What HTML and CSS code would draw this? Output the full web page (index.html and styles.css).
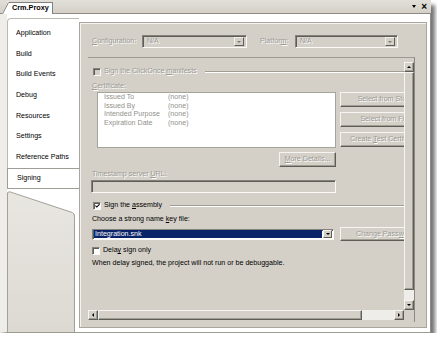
FILE: index.html
```html
<!DOCTYPE html>
<html>
<head>
<meta charset="utf-8">
<link rel="stylesheet" href="styles.css">
</head>
<body>
<div class="window">
  <div class="strip">
    <div class="doctab">
      <svg class="tabslant" width="7" height="12" viewBox="0 0 7 12"><polygon points="0,12 6,0 7,0 7,12" fill="#fff"/><line x1="0.5" y1="12" x2="6.5" y2="0.5" stroke="#808080" stroke-width="1"/></svg>
      <div class="tabbody">Crm.Proxy</div>
    </div>
    <div class="stripctl"><span class="dd"></span><span class="x">×</span></div>
  </div>
  <div class="frame">
    <div class="nav">
      <ul class="navlist">
        <li>Application</li>
        <li>Build</li>
        <li>Build Events</li>
        <li>Debug</li>
        <li>Resources</li>
        <li>Settings</li>
        <li>Reference Paths</li>
        <li class="sel">Signing</li>
      </ul>
      <div class="navfill">
        <svg class="slant" width="68" height="28" viewBox="0 0 68 28">
          <path d="M0,0 H68 V28 H67.5 V26 Q67.5,24.2 65.5,23.6 L3,2.9 Q1,2.3 0,4 Z" fill="#fff"/>
          <path d="M0.5,6 Q0.5,2.2 3,2.9 L65.5,23.6 Q67.5,24.2 67.5,28" fill="none" stroke="#a3a098" stroke-width="1"/>
        </svg>
      </div>
    </div>
    <div class="panel">
      <div class="cfgrow">
        <span class="lbl dis cfglbl"><u>C</u>onfiguration:</span>
        <div class="combo dis cfgcombo"><span class="ctext">N/A</span><span class="ddbtn"><i class="tri dim"></i></span></div>
        <span class="lbl dis platlbl">Platfor<u>m</u>:</span>
        <div class="combo dis platcombo"><span class="ctext">N/A</span><span class="ddbtn"><i class="tri dim"></i></span></div>
      </div>
      <div class="scrollframe">
        <div class="scrollgrid">
          <div class="viewport">
            <div class="row r1"><span class="chk chkdis"></span><span class="dis">Sign the ClickOnce <u>m</u>anifests</span><span class="etch e1"></span></div>
            <div class="lbl2 dis r2"><u>C</u>ertificate:</div>
            <div class="certblock">
              <div class="certlist">
                <div class="crow"><span class="ck">Issued To</span><span>(none)</span></div>
                <div class="crow"><span class="ck">Issued By</span><span>(none)</span></div>
                <div class="crow"><span class="ck">Intended Purpose</span><span>(none)</span></div>
                <div class="crow"><span class="ck">Expiration Date</span><span>(none)</span></div>
              </div>
              <div class="certbtns">
                <div class="btn dis wide">Select from Sto<u>r</u>e...</div>
                <div class="btn dis wide">Select from Fi<u>l</u>e...</div>
                <div class="btn dis wide">Create <u>T</u>est Certificate...</div>
              </div>
            </div>
            <div class="moredet"><div class="btn dis small"><u>M</u>ore Details...</div></div>
            <div class="lbl2 dis r5">Timestamp server <u>U</u>RL:</div>
            <div class="textbox"></div>
            <div class="row r7"><span class="chk"><svg width="6" height="6" viewBox="0 0 6 6"><path d="M0.5,2.5 L2.2,4.3 L5.5,0.8" fill="none" stroke="#000" stroke-width="1.3"/></svg></span><span>Sign the <u>a</u>ssembly</span><span class="etch e2"></span></div>
            <div class="lbl2 r8">Choose a strong name <u>k</u>ey file:</div>
            <div class="keyrow">
              <div class="combo keycombo"><span class="hl">Integration.snk</span><span class="ddbtn"><i class="tri"></i></span></div>
              <div class="btn dis wide chg">Change Pass<u>w</u>ord...</div>
            </div>
            <div class="row r10"><span class="chk"></span><span>Dela<u>y</u> sign only</span></div>
            <div class="lbl2 r11">When delay signed, the project will not run or be debuggable.</div>
          </div>
          <div class="vbar">
            <span class="sbtn"><i class="tri up"></i></span>
            <span class="thumb vthumb"></span>
            <span class="track"></span>
            <span class="sbtn"><i class="tri"></i></span>
          </div>
          <div class="hbar">
            <span class="sbtn"><i class="tri left"></i></span>
            <span class="thumb hthumb"></span>
            <span class="track"></span>
            <span class="sbtn"><i class="tri right"></i></span>
          </div>
          <div class="corner"></div>
        </div>
      </div>
    </div>
  </div>
</div>
</body>
</html>
```

FILE: styles.css
```css
* { box-sizing: border-box; margin: 0; padding: 0; }
html, body { background: #ffffff; }
body {
  font-family: "Liberation Sans", Arial, sans-serif;
  font-size: 7.1px;
  line-height: 9px;
  color: #000;
}
u { text-decoration: underline; text-underline-offset: 1px; text-decoration-thickness: 1px; }
ul { list-style: none; }

.window {
  width: 431px;
  height: 333px;
  background: #d4d0c8;
  box-shadow: 4px 5px 4px rgba(0, 0, 0, 0.55);
  display: flex;
  flex-direction: column;
}

/* document tab strip */
.strip {
  height: 14px;
  flex: none;
  display: flex;
  align-items: flex-end;
  border-bottom: 1px solid #8d8a82;
  padding-left: 2px;
  background: linear-gradient(#e2dfd9, #d4d0c8);
}
.doctab { display: flex; height: 12px; margin-bottom: -1px; }
.tabslant { display: block; }
.tabbody {
  width: 44px;
  background: #fff;
  border-top: 1px solid #808080;
  border-right: 1px solid #808080;
  font-weight: bold;
  font-size: 7.3px;
  line-height: 10px;
  padding-left: 3px;
}
.stripctl {
  margin-left: auto;
  align-self: center;
  display: flex;
  align-items: center;
  gap: 5px;
  padding-right: 4px;
}
.dd {
  width: 0; height: 0;
  border-left: 2.5px solid transparent;
  border-right: 2.5px solid transparent;
  border-top: 3px solid #000;
}
.x { font-weight: bold; font-size: 10px; line-height: 10px; }

/* main frame */
.frame {
  flex: 1;
  display: flex;
  background: #fff;
  padding: 4px 3px 4px 0;
  border-left: 7px solid #eeede9;
  border-right: 1px solid #8d8a82;
  border-bottom: 1px solid #9d9a92;
}

.nav {
  width: 72px;
  flex: none;
  display: flex;
  flex-direction: column;
  margin-bottom: -4px;
}
.navlist {
  background: #fff;
  border-top: 1px solid #bdbab3;
  border-left: 1px solid #bdbab3;
  border-top-left-radius: 4px;
  padding-top: 4px;
}
.navlist li {
  height: 20.7px;
  line-height: 20.7px;
  padding-left: 8px;
}
.navlist li.sel {
  margin-left: -1px;
  padding-left: 9px;
  border: 1px solid #a09d96;
  border-right: none;
  line-height: 18.7px;
}
.navfill {
  flex: 1;
  border-right: 4px solid #fff;
  background: linear-gradient(#e9e7e2, #dcd9d2);
  box-shadow: inset 1px 0 0 #a3a098, inset -1px 0 0 #a3a098;
}
.slant { display: block; }

/* content panel */
.panel {
  width: 348px;
  flex: none;
  margin-top: 4px;
  background: #d4d0c8;
  border: 1px solid #a9a69e;
  box-shadow: inset 1px 1px 0 #f4f3ef;
  display: flex;
  flex-direction: column;
}
.cfgrow {
  display: flex;
  align-items: center;
  height: 13px;
  margin: 12px 0 0 12px;
}
.dis { color: #9c9a95; text-shadow: 1px 1px 0 #fff; }
.cfglbl { width: 50px; flex: none; }
.platlbl { width: 35px; margin-left: 13px; flex: none; }
.combo {
  height: 13px;
  flex: none;
  display: flex;
  align-items: center;
  border: 1px solid;
  border-color: #85827b #fbfaf7 #fbfaf7 #85827b;
  box-shadow: inset 1px 1px 0 #5e5c57;
  padding: 2px 2px 2px 4px;
}
.combo.dis { background: #d4d0c8; }
.cfgcombo { width: 105px; }
.platcombo { width: 103px; }
.ctext { flex: 1; }
.ddbtn {
  width: 10px;
  height: 9px;
  flex: none;
  background: #d4d0c8;
  border: 1px solid;
  border-color: #f3f2ee #5e5c57 #5e5c57 #f3f2ee;
  display: flex;
  align-items: center;
  justify-content: center;
  text-shadow: none;
}
.tri {
  display: block;
  width: 0; height: 0;
  border-left: 2px solid transparent;
  border-right: 2px solid transparent;
  border-top: 2px solid #000;
}
.tri.dim { border-top-color: #7c7a74; }
.tri.up { border-top: none; border-bottom: 2px solid #000; }
.tri.left { border: none; border-top: 2px solid transparent; border-bottom: 2px solid transparent; border-right: 2px solid #000; }
.tri.right { border: none; border-top: 2px solid transparent; border-bottom: 2px solid transparent; border-left: 2px solid #000; }

/* scroll area */
.scrollframe {
  margin: 9px 0 0 8px;
  width: 327px;
  height: 265px;
  border-top: 1px solid #9d9a92;
  border-right: 1px solid #8d8a82;
  padding-top: 4px;
}
.scrollgrid {
  display: grid;
  grid-template-columns: 316px 10px;
  grid-template-rows: 248px 10px;
}
.viewport {
  overflow: hidden;
  padding: 5px 0 0 4px;
}
.vbar { display: flex; flex-direction: column; }
.hbar { display: flex; }
.corner { background: #d4d0c8; }
.sbtn, .thumb {
  background: #d4d0c8;
  border: 1px solid;
  border-color: #f6f5f1 #5e5c57 #5e5c57 #f6f5f1;
  box-shadow: inset -1px -1px 0 #a09d95;
  display: flex;
  align-items: center;
  justify-content: center;
  flex: none;
}
.vbar .sbtn { height: 10px; }
.hbar .sbtn { width: 10px; }
.vthumb { height: 218px; }
.hthumb { width: 264px; }
.track { flex: 1; background: #eeede9; }

.row { display: flex; align-items: center; height: 9px; }
.chk {
  width: 8px; height: 8px;
  flex: none;
  background: #fff;
  border: 1px solid;
  border-color: #85827b #fbfaf7 #fbfaf7 #85827b;
  box-shadow: inset 1px 1px 0 #5e5c57;
  display: flex;
  align-items: center;
  justify-content: center;
  margin-right: 3px;
}
.chk svg { display: block; margin: 1px 0 0 1px; }
.chkdis { background: #d4d0c8; }
.r1 { margin-left: 1px; }
.r7 { margin-left: 1px; margin-top: 8px; }
.etch {
  flex: 1;
  height: 2px;
  border-top: 1px solid #a09d95;
  border-bottom: 1px solid #fff;
}
.e1 { margin-left: 8px; }
.e2 { margin-left: 8px; }
.lbl2 { height: 9px; white-space: nowrap; }
.r2 { margin-top: 6px; }
.certblock { display: flex; margin-top: 1px; }
.certlist {
  width: 239px;
  height: 56px;
  flex: none;
  margin-left: 5px;
  background: #fff;
  border: 1px solid #a6a39b;
  padding-left: 6px;
  color: #92908b;
}
.crow { display: flex; height: 8.7px; line-height: 8.7px; }
.ck { width: 64px; }
.certbtns {
  margin-left: 4px;
  flex: none;
  display: flex;
  flex-direction: column;
  gap: 5px;
}
.btn {
  height: 15px;
  background: #d4d0c8;
  border: 1px solid;
  border-color: #f6f5f1 #5e5c57 #5e5c57 #f6f5f1;
  box-shadow: inset -1px -1px 0 #a09d95;
  text-align: center;
  line-height: 13px;
  white-space: nowrap;
  flex: none;
}
.btn.wide { width: 96px; }
.btn.small { width: 57px; }
.moredet { width: 244px; margin-top: 4px; display: flex; justify-content: flex-end; }
.r5 { margin-top: 3px; }
.textbox {
  width: 245px;
  height: 13px;
  margin: 1px 0 0 -1px;
  background: #d4d0c8;
  border: 1px solid;
  border-color: #85827b #fbfaf7 #fbfaf7 #85827b;
  box-shadow: inset 1px 1px 0 #5e5c57;
}
.r8 { margin-top: 5px; }
.keyrow { display: flex; align-items: center; margin-top: 3px; height: 14px; }
.keycombo {
  width: 242px;
  height: 11px;
  background: #fff;
  padding: 1px;
}
.hl {
  flex: 1;
  height: 8px;
  line-height: 8px;
  background: #0a246a;
  color: #fff;
  padding-left: 1px;
  margin-right: 1px;
}
.keycombo .ddbtn { height: 8px; width: 9px; }
.chg { margin-left: 6px; height: 14px; line-height: 12px; }
.r10 { margin-top: 5px; }
.r11 { margin-top: 4px; }
```
